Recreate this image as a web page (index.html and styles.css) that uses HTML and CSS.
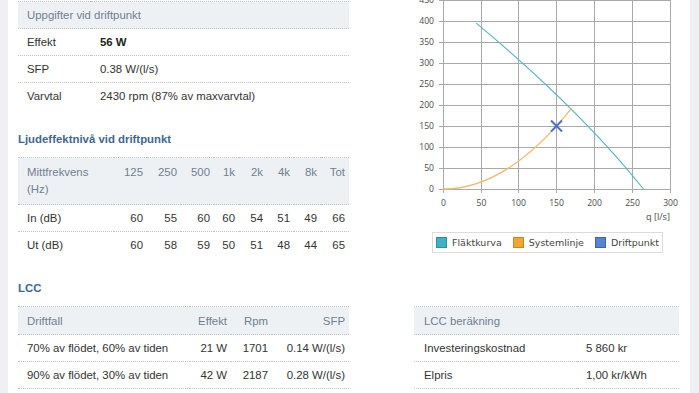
FILE: index.html
```html
<!DOCTYPE html>
<html lang="sv">
<head>
<meta charset="utf-8">
<title>Driftpunkt</title>
<link rel="stylesheet" href="styles.css">
</head>
<body>
<div class="page">
  <div class="gutter"></div>
  <main class="content">
    <div class="grid">
      <div class="col">
        <table class="tbl info">
          <colgroup><col class="c-lbl"><col></colgroup>
          <tr class="head"><th colspan="2">Uppgifter vid driftpunkt</th></tr>
          <tr><td>Effekt</td><td><strong>56 W</strong></td></tr>
          <tr><td>SFP</td><td>0.38 W/(l/s)</td></tr>
          <tr><td>Varvtal</td><td>2430 rpm (87% av maxvarvtal)</td></tr>
        </table>

        <h3 class="section-title">Ljudeffektnivå vid driftpunkt</h3>

        <table class="tbl sound">
          <colgroup>
            <col class="s1"><col class="s2"><col class="s3"><col class="s4"><col class="s5">
            <col class="s6"><col class="s7"><col class="s8"><col class="s9">
          </colgroup>
          <tr class="head">
            <th>Mittfrekvens (Hz)</th><th>125</th><th>250</th><th>500</th><th>1k</th><th>2k</th><th>4k</th><th>8k</th><th>Tot</th>
          </tr>
          <tr><td>In (dB)</td><td>60</td><td>55</td><td>60</td><td>60</td><td>54</td><td>51</td><td>49</td><td>66</td></tr>
          <tr><td>Ut (dB)</td><td>60</td><td>58</td><td>59</td><td>50</td><td>51</td><td>48</td><td>44</td><td>65</td></tr>
        </table>
      </div>

      <div class="chart">
        <svg class="plot" width="265" height="226" viewBox="0 0 265 226">
          <g class="grid-lines">
            <line x1="29.5" y1="0" x2="29.5" y2="193"/>
            <line x1="67.5" y1="0" x2="67.5" y2="193"/>
            <line x1="104.5" y1="0" x2="104.5" y2="193"/>
            <line x1="142.5" y1="0" x2="142.5" y2="193"/>
            <line x1="180.5" y1="0" x2="180.5" y2="193"/>
            <line x1="218.5" y1="0" x2="218.5" y2="193"/>
            <line x1="256.5" y1="0" x2="256.5" y2="193"/>
            <line x1="25" y1="0.5" x2="256.5" y2="0.5"/>
            <line x1="25" y1="21.5" x2="256.5" y2="21.5"/>
            <line x1="25" y1="42.5" x2="256.5" y2="42.5"/>
            <line x1="25" y1="63.5" x2="256.5" y2="63.5"/>
            <line x1="25" y1="84.5" x2="256.5" y2="84.5"/>
            <line x1="25" y1="105.5" x2="256.5" y2="105.5"/>
            <line x1="25" y1="126.5" x2="256.5" y2="126.5"/>
            <line x1="25" y1="147.5" x2="256.5" y2="147.5"/>
            <line x1="25" y1="168.5" x2="256.5" y2="168.5"/>
            <line x1="25" y1="189.5" x2="256.5" y2="189.5"/>
          </g>
          <g class="ylab">
            <text x="20" y="3">450</text>
            <text x="20" y="24">400</text>
            <text x="20" y="45">350</text>
            <text x="20" y="66">300</text>
            <text x="20" y="87">250</text>
            <text x="20" y="108">200</text>
            <text x="20" y="129">150</text>
            <text x="20" y="150">100</text>
            <text x="20" y="171">50</text>
            <text x="20" y="192">0</text>
          </g>
          <g class="xlab">
            <text x="29.5" y="206">0</text>
            <text x="67.5" y="206">50</text>
            <text x="104.5" y="206">100</text>
            <text x="142.5" y="206">150</text>
            <text x="180.5" y="206">200</text>
            <text x="218.5" y="206">250</text>
            <text x="256.5" y="206">300</text>
          </g>
          <text class="xtitle" x="256" y="220">q [l/s]</text>
          <path class="fan" d="M62.3,23.1 C128.3,78.1 185.5,134 229.5,189"/>
          <path class="system" d="M29.5,189 Q93.3,189 157.6,108.1"/>
          <g class="point">
            <line x1="137" y1="120.5" x2="148" y2="131.5"/>
            <line x1="148" y1="120.5" x2="137" y2="131.5"/>
          </g>
        </svg>
        <div class="legend">
          <span class="item"><span class="sw sw-fan"></span>Fläktkurva</span>
          <span class="item"><span class="sw sw-sys"></span>Systemlinje</span>
          <span class="item"><span class="sw sw-pt"></span>Driftpunkt</span>
        </div>
      </div>
    </div>

    <h3 class="section-title">LCC</h3>

    <div class="grid">
      <table class="tbl lcc">
        <colgroup><col class="l1"><col class="l2"><col class="l3"><col class="l4"></colgroup>
        <tr class="head"><th>Driftfall</th><th>Effekt</th><th>Rpm</th><th>SFP</th></tr>
        <tr><td>70% av flödet, 60% av tiden</td><td>21 W</td><td>1701</td><td>0.14 W/(l/s)</td></tr>
        <tr><td>90% av flödet, 30% av tiden</td><td>42 W</td><td>2187</td><td>0.28 W/(l/s)</td></tr>
      </table>

      <table class="tbl calc">
        <colgroup><col class="k1"><col></colgroup>
        <tr class="head"><th colspan="2">LCC beräkning</th></tr>
        <tr><td>Investeringskostnad</td><td>5 860 kr</td></tr>
        <tr><td>Elpris</td><td>1,00 kr/kWh</td></tr>
      </table>
    </div>
  </main>
  <div class="gutter right"></div>
</div>
</body>
</html>
```

FILE: styles.css
```css
html, body {
  margin: 0;
  padding: 0;
  background: #ffffff;
}

body {
  font-family: "Liberation Sans", Arial, sans-serif;
  font-size: 11.4px;
  color: #333333;
}

.page {
  display: flex;
  height: 393px;
  overflow: hidden;
}

.gutter {
  width: 8px;
  flex: 0 0 8px;
  background: #eef0f4;
}

.gutter.right {
  width: 9px;
  flex: 0 0 9px;
}

.content {
  flex: 1;
  padding: 0 11px 0 10px;
}

.grid {
  display: grid;
  grid-template-columns: 331px 265px;
  column-gap: 65px;
  align-items: start;
}

.col {
  display: flex;
  flex-direction: column;
}

/* tables */
.tbl {
  border-collapse: collapse;
  table-layout: fixed;
  width: 100%;
}

.tbl th,
.tbl td {
  border-top: 1px dotted #c2c2c2;
  padding: 5px 4px 5px 0;
  line-height: 16px;
  font-weight: normal;
  text-align: right;
  white-space: nowrap;
}

.tbl th:first-child,
.tbl td:first-child {
  text-align: left;
  padding-left: 9px;
}

.tbl .head th {
  background: #eef1f4;
  color: #6f8093;
}

.info {
  margin-top: 1px;
}

.info th,
.info td {
  text-align: left;
  padding-left: 9px;
}

.info strong {
  font-weight: bold;
  color: #222222;
}

.c-lbl { width: 73px; }

.section-title {
  margin: 22px 0 10px;
  font-size: 11.4px;
  line-height: 16px;
  font-weight: bold;
  color: #3e6893;
}

/* sound table */
.sound .head th {
  line-height: 17px;
  padding-top: 6px;
  padding-bottom: 6px;
  vertical-align: top;
}

.sound .head th:first-child {
  white-space: normal;
}

.s1 { width: 96px; }
.s2 { width: 33px; }
.s3 { width: 34px; }
.s4 { width: 33px; }
.s5 { width: 25px; }
.s6 { width: 28px; }
.s7 { width: 27px; }
.s8 { width: 27px; }
.s9 { width: 28px; }

/* LCC tables */
.lcc,
.calc {
  border-bottom: 1px dotted #c2c2c2;
}

.lcc .head th {
  padding-top: 6px;
}

.calc .head th {
  padding-top: 6px;
}

.l1 { width: 172px; }
.l2 { width: 41px; }
.l3 { width: 41px; }
.l4 { width: 77px; }

.calc th,
.calc td {
  text-align: left;
  padding-left: 9px;
}

.calc th:first-child,
.calc td:first-child {
  padding-left: 10px;
}

.k1 { width: 163px; }

/* chart */
.chart {
  display: flex;
  flex-direction: column;
}

.plot {
  display: block;
  overflow: hidden;
}

.grid-lines line {
  stroke: #a9a9a9;
  stroke-width: 1;
}

.ylab text,
.xlab text,
.xtitle {
  font-family: "Open Sans", "DejaVu Sans", sans-serif;
  font-size: 8.6px;
  fill: #4a4a4a;
}

.ylab text { text-anchor: end; }
.xlab text { text-anchor: middle; }
.xtitle { text-anchor: end; font-size: 9.2px; }

.fan {
  fill: none;
  stroke: #58b3c4;
  stroke-width: 1.1;
}

.system {
  fill: none;
  stroke: #f1bb6e;
  stroke-width: 1.3;
}

.point line {
  stroke: #4f70c2;
  stroke-width: 2;
}

.legend {
  display: inline-flex;
  align-self: flex-start;
  align-items: center;
  margin: 6px 0 0 18px;
  padding: 2px 3px 2px 2px;
  height: 15px;
  border: 1px solid #dcdcdc;
  font-family: "DejaVu Sans", Verdana, sans-serif;
  font-size: 9.5px;
  color: #444444;
}

.item {
  display: inline-flex;
  align-items: center;
  margin-right: 10px;
}

.item:last-child {
  margin-right: 0;
}

.sw {
  display: inline-block;
  width: 9px;
  height: 9px;
  margin: 0 5px 0 1px;
  border: 1px solid;
}

.sw-fan { background: #3fb3c3; border-color: #2d8f9d; }
.sw-sys { background: #f2a532; border-color: #cc861c; }
.sw-pt  { background: #5683d4; border-color: #3c63ad; }
```
